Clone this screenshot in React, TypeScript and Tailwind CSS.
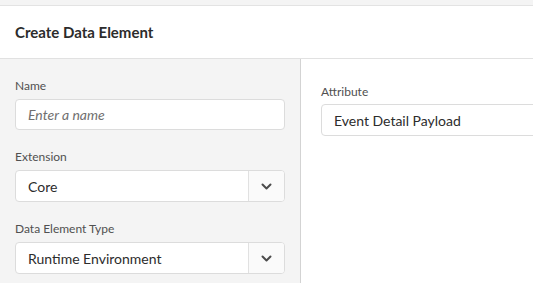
import React from 'react';

const font = { fontFamily: 'Lato, "Noto Sans", sans-serif' };

const Chevron = () => (
  <svg width="11" height="7" viewBox="0 0 11 7" fill="none">
    <path d="M1.5 1.5l4 4 4-4" stroke="#4b4b4b" strokeWidth="2" strokeLinecap="round" strokeLinejoin="round" />
  </svg>
);

const Label = ({ children }: { children: React.ReactNode }) => (
  <div className="text-[12px] leading-4 text-[#505050] mb-[5px]">{children}</div>
);

const Select = ({ value }: { value: string }) => (
  <div className="flex h-[32px] w-[270px] bg-white border border-[#dcdcdc] rounded-[4px] overflow-hidden">
    <div className="flex-1 flex items-center pl-[12px] text-[14px] text-[#2c2c2c]">{value}</div>
    <div className="w-[36px] flex items-center justify-center bg-[#fafafa] border-l border-[#e1e1e1]">
      <Chevron />
    </div>
  </div>
);

export default function App() {
  return (
    <div className="w-[533px] h-[283px] overflow-hidden bg-[#f4f4f4] flex flex-col" style={font}>
      <div className="h-[6px] shrink-0 bg-[#f4f4f4] border-b border-[#e3e3e3]" />
      <div className="h-[53px] shrink-0 bg-white border-b border-[#e1e1e1] flex items-center px-[15px]">
        <h1 className="text-[15px] font-bold text-[#2c2c2c]">Create Data Element</h1>
      </div>
      <div className="flex flex-1">
        <div className="w-[301px] shrink-0 bg-[#f4f4f4] border-r border-[#d3d3d3] pl-[15px] pt-[19px]">
          <div className="mb-[19px]">
            <Label>Name</Label>
            <div className="h-[31px] w-[270px] bg-white border border-[#dcdcdc] rounded-[4px] flex items-center pl-[12px] text-[14px] italic text-[#707070]">
              Enter a name
            </div>
          </div>
          <div className="mb-[19px]">
            <Label>Extension</Label>
            <Select value="Core" />
          </div>
          <div>
            <Label>Data Element Type</Label>
            <Select value="Runtime Environment" />
          </div>
        </div>
        <div className="flex-1 bg-white pl-[20px] pt-[25px]">
          <div className="text-[12px] leading-4 text-[#505050] mb-[4px]">Attribute</div>
          <div className="h-[32px] w-[260px] bg-white border border-[#dcdcdc] rounded-[4px] flex items-center pl-[12px] text-[14px] text-[#2c2c2c]">
            Event Detail Payload
          </div>
        </div>
      </div>
    </div>
  );
}
